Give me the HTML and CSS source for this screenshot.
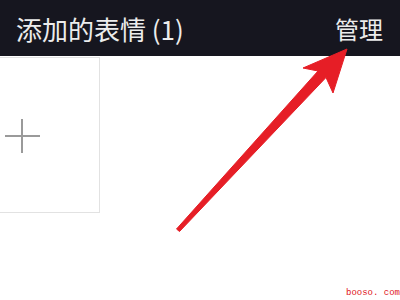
FILE: index.html
```html
<!DOCTYPE html>
<html>
<head>
<meta charset="utf-8">
<link rel="stylesheet" href="styles.css">
</head>
<body>
<div class="page">
  <header class="topbar">
    <span class="title">添加的表情 (1)</span>
    <span class="manage">管理</span>
  </header>
  <main class="content">
    <div class="add-card">
      <svg class="plus" width="37" height="36" viewBox="0 0 37 36"><path d="M18 1V35M1 18H36" stroke="#9a9a9a" stroke-width="2" fill="none"/></svg>
    </div>
  </main>
  <svg class="arrow" width="400" height="300" viewBox="0 0 400 300">
    <polygon points="176.5,229 318,71 303,68 347,49 333,93 326,77.5 179.5,231.5" fill="#e61e26" stroke="#e61e26" stroke-width="1" stroke-linejoin="round"/>
  </svg>
  <div class="watermark">booso. com</div>
</div>
</body>
</html>
```
FILE: styles.css
```css
html, body {
  margin: 0;
  padding: 0;
  background: #ffffff;
}
.page {
  position: relative;
  width: 400px;
  height: 300px;
  overflow: hidden;
  font-family: "Noto Sans CJK SC", "Noto Sans", sans-serif;
}
.topbar {
  height: 56px;
  background: #16161f;
  display: flex;
  align-items: center;
  justify-content: space-between;
  padding: 0 17px 0 16px;
  color: #ececec;
}
.title {
  font-size: 26px;
}
.manage {
  font-size: 24px;
}
.content {
  padding-top: 1px;
}
.add-card {
  width: 156px;
  height: 156px;
  margin-left: -56px;
  border: 1px solid #e2e2e2;
  display: flex;
  align-items: center;
  justify-content: center;
  box-sizing: border-box;
  padding-top: 1px;
}
.plus {
  display: block;
}
.arrow {
  position: absolute;
  left: 0;
  top: 0;
}
.watermark {
  position: absolute;
  right: 0;
  bottom: 2px;
  font-family: "Liberation Mono", monospace;
  font-size: 9px;
  color: #e0141c;
}
```
